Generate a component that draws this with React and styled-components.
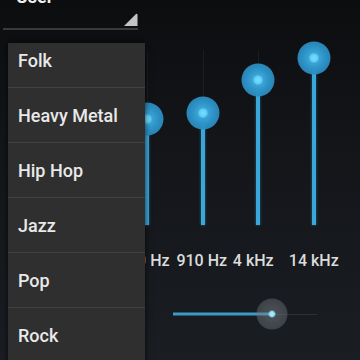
import React from 'react';
import styled, { createGlobalStyle } from 'styled-components';

const Global = createGlobalStyle`
  html, body { margin: 0; padding: 0; background: #121418; }
  body { font-family: Roboto, "Noto Sans", sans-serif; }
`;

const Screen = styled.div`
  position: relative;
  width: 360px;
  height: 360px;
  overflow: hidden;
  background: linear-gradient(180deg, #0c0d0f 0%, #131519 40%, #1a1d22 100%);
  display: flex;
  flex-direction: column;
`;

const Spinner = styled.div`
  display: flex;
  justify-content: space-between;
  width: 135px;
  height: 44px;
  margin: -14px 0 0 3px;
  padding-left: 13px;
  box-sizing: border-box;
  border-bottom: 2px solid #3a3a3a;
`;

const SpinnerText = styled.span`
  font-size: 18px;
  line-height: 22px;
  font-weight: 700;
  color: #efefef;
`;

const Corner = styled.svg`
  align-self: flex-end;
  width: 15px;
  height: 15px;
  margin-bottom: 1px;
`;

const Equalizer = styled.section`
  display: flex;
  flex-direction: column;
  padding-top: 20px;
`;

const Bands = styled.div`
  display: flex;
  padding-left: 64px;
`;

const Band = styled.div`
  width: 55.5px;
  display: flex;
  flex-direction: column;
  align-items: center;
`;

const Track = styled.div`
  position: relative;
  width: 36px;
  height: 175px;
  &::before {
    content: '';
    position: absolute;
    left: 50%;
    top: 0;
    bottom: 0;
    width: 1px;
    background: rgba(255, 255, 255, 0.05);
  }
`;

const Fill = styled.div`
  position: absolute;
  left: 50%;
  bottom: 0;
  width: 4px;
  transform: translateX(-50%);
  background: #3aa6da;
  box-shadow: 0 0 3px rgba(58, 166, 218, 0.55);
`;

const Knob = styled.div`
  position: absolute;
  left: 50%;
  width: 33px;
  height: 33px;
  border-radius: 50%;
  transform: translate(-50%, -50%);
  background: radial-gradient(circle, #7cdcff 0, #62d0f6 3.5px, #3aa3d6 5.5px, #2e93c6 45%, rgba(42, 140, 192, 0.92) 75%, rgba(42, 140, 192, 0.35) 100%);
  filter: blur(0.4px);
`;

const Label = styled.span`
  margin-top: 27px;
  font-size: 16px;
  line-height: 18px;
  font-weight: 500;
  color: #dcdcdc;
  white-space: nowrap;
  transform: translateX(${(p) => p.$shift || 0}px);
`;

const BassSlider = styled.div`
  position: relative;
  margin: 29px 0 0 173px;
  width: 144px;
  height: 30px;
  &::before {
    content: '';
    position: absolute;
    left: 0;
    right: 0;
    top: 50%;
    height: 1px;
    background: rgba(255, 255, 255, 0.09);
  }
`;

const BassFill = styled.div`
  position: absolute;
  left: 0;
  top: 50%;
  height: 3px;
  transform: translateY(-50%);
  background: #3d9ac4;
`;

const BassKnob = styled.div`
  position: absolute;
  top: 50%;
  width: 31px;
  height: 31px;
  border-radius: 50%;
  transform: translate(-50%, -50%);
  background: radial-gradient(circle, #b8f0ff 0, #8fdcf3 2.5px, rgba(120, 130, 140, 0.5) 4px, rgba(110, 115, 122, 0.42) 78%, rgba(110, 115, 122, 0.12) 100%);
`;

const Menu = styled.div`
  position: absolute;
  left: 8px;
  top: 43px;
  width: 137px;
  bottom: -20px;
  overflow: hidden;
  background: #2f2f2f;
  box-shadow: 0 0 6px rgba(0, 0, 0, 0.7);
`;

const MenuList = styled.ul`
  list-style: none;
  margin: -10px 0 0;
  padding: 0;
`;

const MenuItem = styled.li`
  height: 54px;
  display: flex;
  align-items: center;
  padding-left: 10px;
  border-bottom: 1px solid #414141;
  font-size: 18px;
  font-weight: 500;
  color: #e9e9e9;
`;

const bands = [
  { label: '60 Hz', pos: 50, shift: 0 },
  { label: '230 Hz', pos: 69, shift: -3 },
  { label: '910 Hz', pos: 63, shift: -1 },
  { label: '4 kHz', pos: 30, shift: -5 },
  { label: '14 kHz', pos: 8, shift: 0 },
];

const presets = ['Folk', 'Heavy Metal', 'Hip Hop', 'Jazz', 'Pop', 'Rock'];

export default function App() {
  return (
    <>
      <Global />
      <Screen>
        <Spinner>
          <SpinnerText>User</SpinnerText>
          <Corner viewBox="0 0 15 15">
            <path d="M1 14 L13 2 Q14.5 1 14.5 3 L14.5 14 Z" fill="#c4c4c4" />
          </Corner>
        </Spinner>
        <Equalizer>
          <Bands>
            {bands.map((b) => (
              <Band key={b.label}>
                <Track>
                  <Fill style={{ height: 175 - b.pos }} />
                  <Knob style={{ top: b.pos }} />
                </Track>
                <Label $shift={b.shift}>{b.label}</Label>
              </Band>
            ))}
          </Bands>
          <BassSlider>
            <BassFill style={{ width: 99 }} />
            <BassKnob style={{ left: 99 }} />
          </BassSlider>
        </Equalizer>
        <Menu>
          <MenuList>
            {presets.map((p) => (
              <MenuItem key={p}>{p}</MenuItem>
            ))}
          </MenuList>
        </Menu>
      </Screen>
    </>
  );
}
